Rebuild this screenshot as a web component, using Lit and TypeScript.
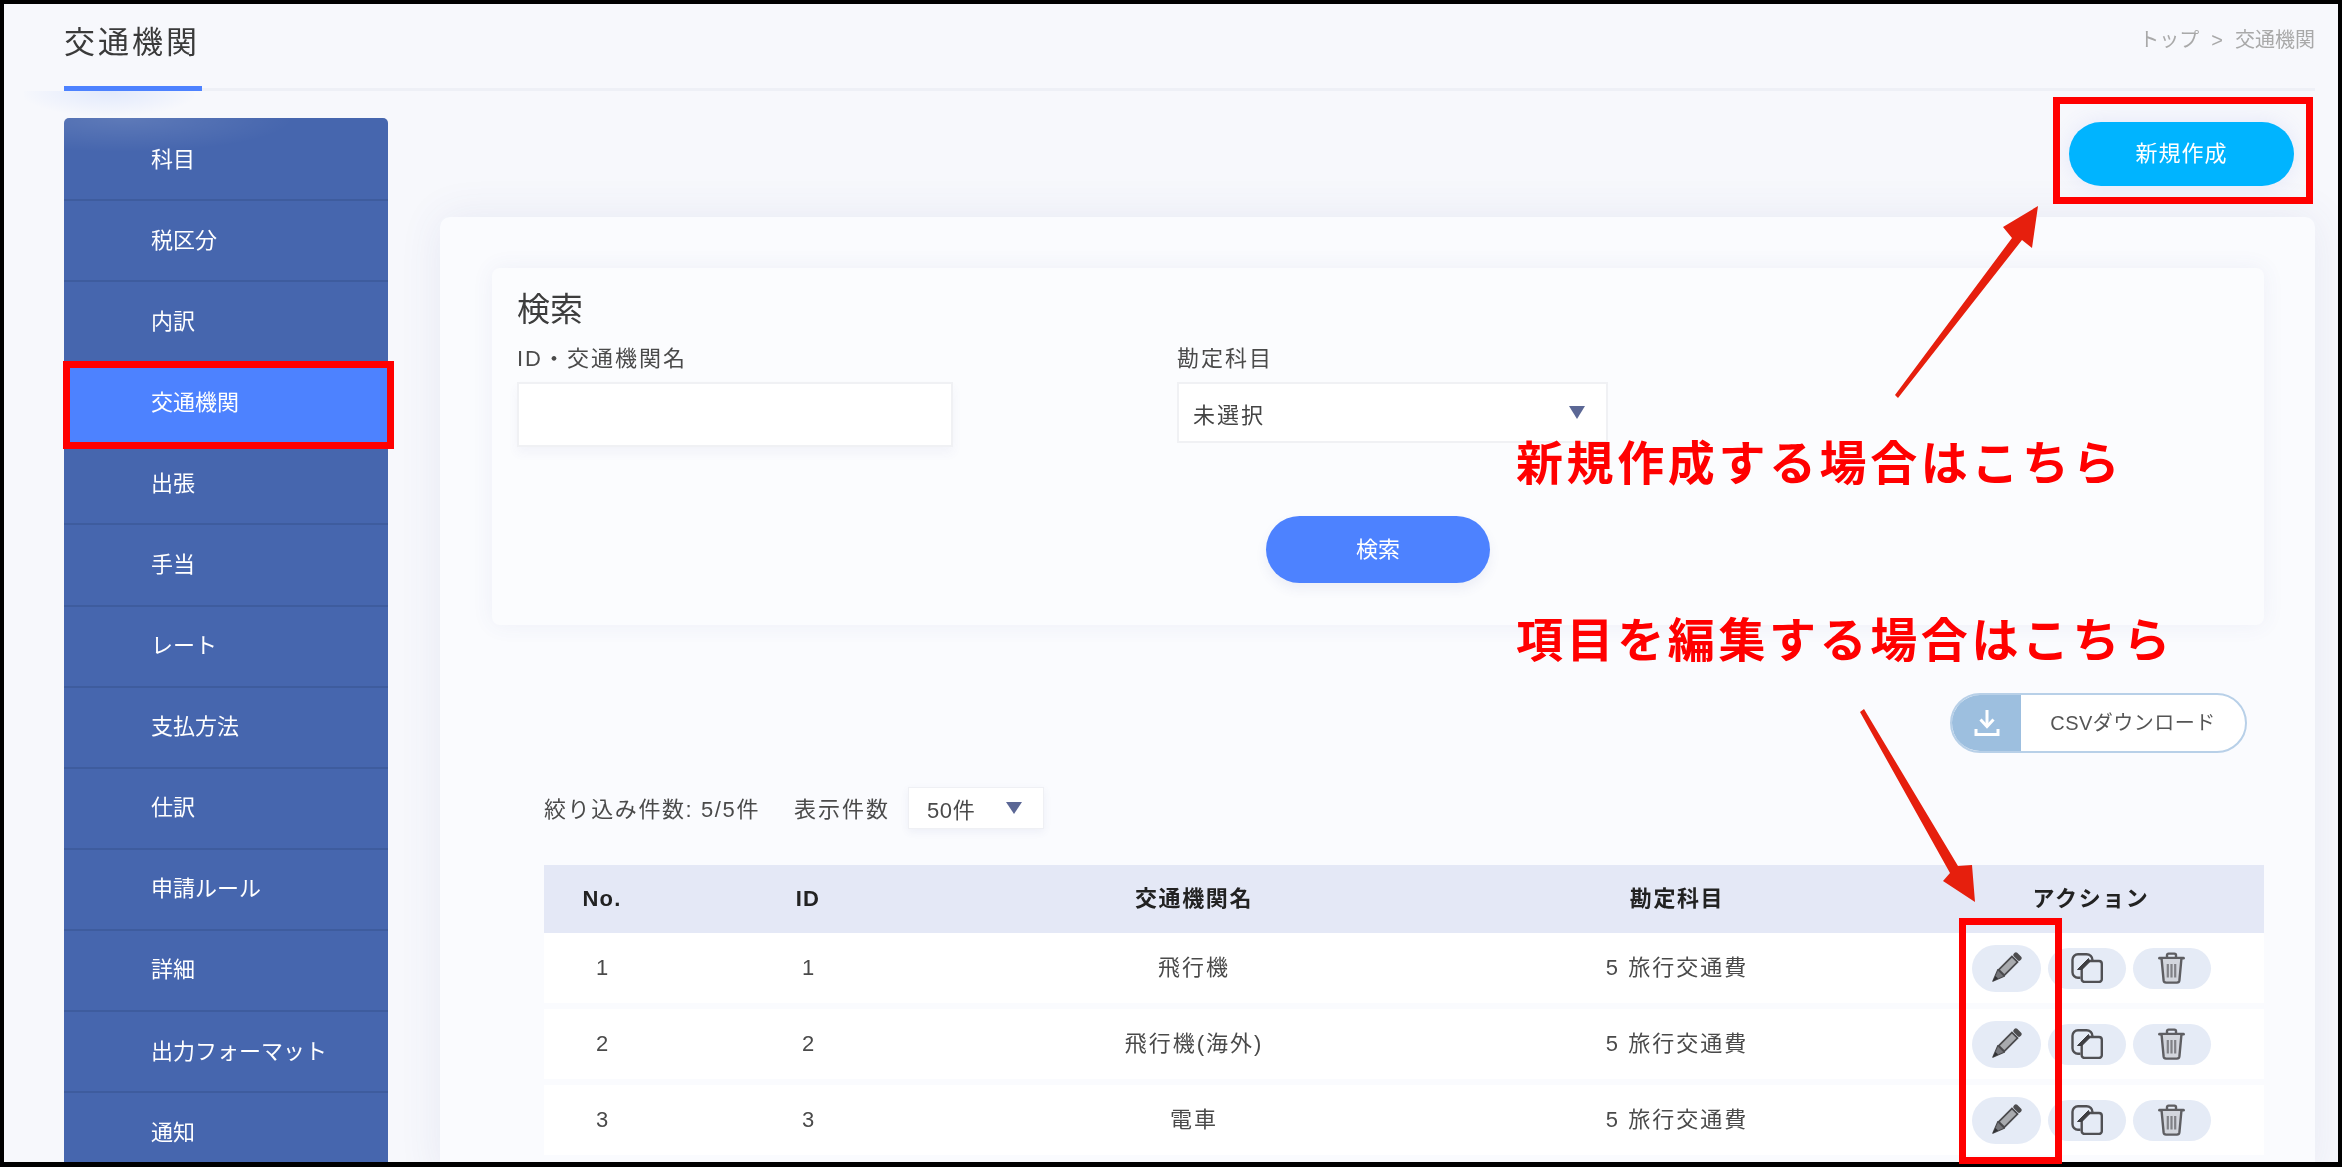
import { LitElement, html, css, svg } from "lit";
import { customElement } from "lit/decorators.js";

const NAV = ["科目", "税区分", "内訳", "交通機関", "出張", "手当", "レート", "支払方法", "仕訳", "申請ルール", "詳細", "出力フォーマット", "通知"];
const ROWS = [
  ["1", "1", "飛行機", "5 旅行交通費"],
  ["2", "2", "飛行機(海外)", "5 旅行交通費"],
  ["3", "3", "電車", "5 旅行交通費"],
];

const pencil = html`<svg class="ic-pencil" viewBox="0 0 24 24">
  <g transform="rotate(45 12 12)">
    <rect x="8" y="-4" width="8" height="4.2" rx="1.6" fill="#4d4d4f"></rect>
    <rect x="8.6" y="1.4" width="6.8" height="16" fill="#a8aaae" stroke="#4a4a4d" stroke-width="1.5"></rect>
    <path d="M8 18h8l-4 10z" fill="#74757a" stroke="#4a4a4d" stroke-width="1" stroke-linejoin="round"></path>
    <path d="M10.400 23.200h3.200l-1.600 4.800z" fill="#2f2f32"></path>
  </g>
</svg>`;

const copy = html`<svg class="ic-copy" viewBox="0 0 32 30" fill="none" stroke="#505054" stroke-width="2.400" stroke-linejoin="round">
  <path d="M9.500 24.800H7A5.500 5.500 0 0 1 1.500 19.300V6.700A5.500 5.500 0 0 1 7 1.200h8.500A6 6 0 0 1 21.500 7.200V8"></path>
  <path d="M17 8h11a2.800 2.800 0 0 1 2.800 2.800v15.400a2.800 2.800 0 0 1-2.800 2.800H13.500a2.800 2.800 0 0 1-2.800-2.800V14.500z"></path>
  <path d="M6.500 16.500 17.500 5.500l1 3.500-7.500 7.500z" fill="#3e3e42" stroke="#3e3e42" stroke-width="1"></path>
</svg>`;

const trash = html`<svg class="ic-trash" viewBox="0 0 27 32" fill="none" stroke="#5e5e62" stroke-width="2.400" stroke-linecap="round" stroke-linejoin="round">
  <path d="M9 5.500V3.200Q9 1.600 10.600 1.600h5.800Q18 1.600 18 3.200v2.300"></path>
  <path d="M1.500 6.200h24" stroke-width="2.800"></path>
  <path d="M3.600 7l2 21.400Q5.900 30.600 8 30.600h11q2.100 0 2.400-2.200L23.400 7" fill="#d3d6dd"></path>
  <path d="M9.800 12v13.500M13.500 12v13.500M17.200 12v13.500" stroke="#808186" stroke-width="2.200" stroke-linecap="butt"></path>
</svg>`;

@customElement("app-root")
export class AppRoot extends LitElement {
  static styles = css`
    :host {
      display: block;
      position: relative;
      width: 2342px;
      height: 1167px;
      background: #000;
      overflow: hidden;
      font-family: "Liberation Sans", "Noto Sans CJK JP", sans-serif;
      color: #444;
    }
    .frame {
      position: absolute;
      inset: 4px 4px 5px 4px;
      background: #f7f8fc;
      overflow: hidden;
      padding: 0 23px 0 60px;
      box-sizing: border-box;
      filter: blur(0.55px);
    }
    header { display: flex; height: 87px; }
    .tab {
      width: 138px;
      box-sizing: border-box;
      height: 87px;
      border-bottom: 5px solid #4d82ff;
      padding-bottom: 4px;
      font-size: 31px;
      line-height: 78px;
      letter-spacing: 3px;
      color: #3a3a3a;
      white-space: nowrap;
    }
    .glow {
      position: absolute;
      left: 20px;
      top: 87px;
      width: 170px;
      height: 28px;
      background: radial-gradient(ellipse 90px 26px at 50% 0, rgba(77, 130, 255, 0.13), rgba(77, 130, 255, 0));
    }
    .crumb {
      flex: 1;
      box-sizing: border-box;
      height: 87px;
      border-bottom: 3px solid #eef0f6;
      text-align: right;
      font-size: 20px;
      line-height: 72px;
      color: #a9a9a9;
    }
    .crumb span { margin: 0 12px; }
    .body { display: flex; gap: 52px; }
    nav {
      width: 324px;
      flex: none;
      margin-top: 27px;
      padding-top: 2px;
      background: #4666ae radial-gradient(ellipse 170px 34px at 60px 0, rgba(255, 255, 255, 0.13), rgba(255, 255, 255, 0)) no-repeat;
      border-radius: 5px 5px 0 0;
      overflow: hidden;
    }
    .item {
      height: 81.1px;
      box-sizing: border-box;
      border-bottom: 2px solid #3e5c9e;
      padding: 0 0 6px 87px;
      display: flex;
      align-items: center;
      font-size: 22px;
      color: #fff;
    }
    .item.on { background: #4d82ff; }
    .main { flex: 1; min-width: 0; }
    .top { display: flex; justify-content: flex-end; padding: 31px 21px 31px 0; }
    .btn-new {
      width: 225px;
      height: 64px;
      box-sizing: border-box;
      padding-bottom: 6px;
      border-radius: 32px;
      background: #00b4ff;
      color: #fff;
      font-size: 22px;
      letter-spacing: 1px;
      display: flex;
      align-items: center;
      justify-content: center;
      box-shadow: 0 0 22px rgba(90, 110, 220, 0.12);
    }
    .panel {
      background: #fafbfe;
      border-radius: 10px 10px 0 0;
      padding: 51px 51px 40px 52px;
      box-shadow: 0 0 44px rgba(70, 80, 150, 0.09);
      height: 960px;
      box-sizing: border-box;
    }
    .card {
      background: #fbfcfe;
      border-radius: 8px;
      padding: 19px 25px 42px;
      box-shadow: 0 0 22px rgba(70, 80, 150, 0.07);
    }
    .card h2 {
      margin: 0 0 11px;
      font-weight: 400;
      font-size: 33px;
      line-height: 46px;
      color: #3d3d3d;
    }
    .fields { display: flex; gap: 224px; }
    .lab {
      font-size: 22px;
      line-height: 30px;
      margin-bottom: 8px;
      white-space: nowrap;
      letter-spacing: 2px;
      color: #4a4a4a;
    }
    .input {
      width: 436px;
      height: 65px;
      background: #fff;
      border: 2px solid #f0f1f4;
      box-sizing: border-box;
      box-shadow: 0 6px 10px rgba(70, 80, 150, 0.05);
    }
    .select {
      width: 431px;
      height: 61px;
      background: #fff;
      border: 2px solid #f0f1f4;
      box-sizing: border-box;
      display: flex;
      align-items: center;
      justify-content: space-between;
      padding: 0 21px 0 14px;
      font-size: 22px;
      letter-spacing: 2px;
      color: #444;
    }
    .tri {
      width: 0;
      height: 0;
      border-left: 8px solid transparent;
      border-right: 8px solid transparent;
      border-top: 13px solid #5b6795;
    }
    .btn-search {
      width: 224px;
      height: 67px;
      box-sizing: border-box;
      padding-bottom: 6px;
      margin: 69px auto 0;
      border-radius: 34px;
      background: #4d82ff;
      color: #fff;
      font-size: 22px;
      display: flex;
      align-items: center;
      justify-content: center;
      box-shadow: 0 6px 12px rgba(70, 80, 150, 0.08);
    }
    .list { margin-left: 52px; }
    .csv-row { display: flex; justify-content: flex-end; margin-top: 68px; padding-right: 17px; }
    .csv {
      width: 297px;
      height: 60px;
      border: 2px solid #b8d0e8;
      border-radius: 30px;
      background: #fff;
      box-sizing: border-box;
      display: flex;
      overflow: hidden;
      font-size: 20px;
      letter-spacing: 0.5px;
      color: #555;
    }
    .csv .ico {
      width: 69px;
      background: #9dbfdf;
      display: flex;
      align-items: center;
      justify-content: center;
    }
    .csv .ico svg { width: 26px; height: 28px; }
    .csv .txt { flex: 1; display: flex; align-items: center; justify-content: center; white-space: nowrap; padding-bottom: 3px; }
    .filter {
      display: flex;
      align-items: center;
      height: 42px;
      margin-top: 34px;
      font-size: 22px;
      letter-spacing: 1.6px;
      color: #4a4a4a;
    }
    .filter .count { white-space: nowrap; width: 250px; padding-bottom: 2px; }
    .filter .show { white-space: nowrap; width: 114px; letter-spacing: 2px; padding-bottom: 2px; }
    .mini {
      width: 136px;
      height: 42px;
      box-sizing: border-box;
      background: #fff;
      border: 1px solid #eff0f4;
      box-shadow: 0 3px 8px rgba(70, 80, 150, 0.07);
      display: flex;
      align-items: center;
      padding-left: 18px;
      font-size: 22px;
      letter-spacing: 0.6px;
    }
    .mini .tri { margin-left: 31px; border-top-width: 12px; }
    .table { margin-top: 36px; display: flex; flex-direction: column; gap: 6px; }
    .tr {
      display: grid;
      grid-template-columns: 116px 296px 476px 490px 338px 1fr;
      align-items: center;
      text-align: center;
      height: 70px;
      background: #fff;
      font-size: 22px;
      color: #4a4a4a;
    }
    .tr .cj { padding-bottom: 7px; letter-spacing: 2px; }
    .tr.head {
      height: 68px;
      margin-bottom: -6px;
      background: #e4e8f6;
      font-weight: 700;
      color: #222;
      letter-spacing: 1.2px;
    }
    .tr.head .cj { padding-bottom: 6px; letter-spacing: 1.6px; }
    .acts { display: flex; justify-content: center; align-items: center; gap: 7px; }
    .pill {
      height: 41px;
      width: 78px;
      border-radius: 21px;
      background: #e5ebf6;
      display: flex;
      align-items: center;
      justify-content: center;
    }
    .pill.edit { height: 47px; width: 69px; border-radius: 24px; }
    .ic-pencil { width: 28px; height: 30px; overflow: visible; }
    .ic-copy { width: 32px; height: 30px; }
    .ic-trash { width: 27px; height: 32px; }
    .overlay { position: absolute; left: 0; top: 0; width: 2342px; height: 1167px; pointer-events: none; }
    .note {
      position: absolute;
      left: 1516px;
      font-size: 47px;
      line-height: 60px;
      font-weight: 700;
      letter-spacing: 3.6px;
      color: #ff0000;
      white-space: nowrap;
      filter: blur(0.4px);
    }
    .n1 { top: 434px; }
    .n2 { top: 611px; }
    .box { position: absolute; border: 7px solid #ff0000; box-sizing: border-box; }
    .b1 { left: 63px; top: 361px; width: 331px; height: 88px; }
    .b2 { left: 2053px; top: 97px; width: 260px; height: 107px; }
    .b3 { left: 1959px; top: 918px; width: 103px; height: 246px; }
  `;

  render() {
    return html`
      <div class="frame">
        <div class="glow"></div>
        <header>
          <div class="tab">交通機関</div>
          <div class="crumb">トップ<span>&gt;</span>交通機関</div>
        </header>
        <div class="body">
          <nav>
            ${NAV.map((n) => html`<div class="item ${n === "交通機関" ? "on" : ""}">${n}</div>`)}
          </nav>
          <div class="main">
            <div class="top"><div class="btn-new">新規作成</div></div>
            <div class="panel">
              <section class="card">
                <h2>検索</h2>
                <div class="fields">
                  <div>
                    <div class="lab">ID・交通機関名</div>
                    <div class="input"></div>
                  </div>
                  <div>
                    <div class="lab">勘定科目</div>
                    <div class="select"><span>未選択</span><i class="tri"></i></div>
                  </div>
                </div>
                <div class="btn-search">検索</div>
              </section>
              <section class="list">
                <div class="csv-row">
                  <div class="csv">
                    <div class="ico">
                      <svg viewBox="0 0 26 28" fill="none" stroke="#fff" stroke-width="3">
                        <path d="M13 1v15"></path>
                        <path d="M6.500 10.500 13 17.500l6.500-7" stroke-linejoin="miter"></path>
                        <path d="M2 20v5.500h22V20"></path>
                      </svg>
                    </div>
                    <div class="txt">CSVダウンロード</div>
                  </div>
                </div>
                <div class="filter">
                  <span class="count">絞り込み件数: 5/5件</span>
                  <span class="show">表示件数</span>
                  <div class="mini">50件<i class="tri"></i></div>
                </div>
                <div class="table">
                  <div class="tr head">
                    <span>No.</span><span>ID</span><span class="cj">交通機関名</span><span class="cj">勘定科目</span><span class="cj">アクション</span>
                  </div>
                  ${ROWS.map(
                    (r) => html`<div class="tr">
                      <span>${r[0]}</span><span>${r[1]}</span><span class="cj">${r[2]}</span><span class="cj">${r[3]}</span>
                      <div class="acts">
                        <div class="pill edit">${pencil}</div>
                        <div class="pill">${copy}</div>
                        <div class="pill">${trash}</div>
                      </div>
                    </div>`
                  )}
                </div>
              </section>
            </div>
          </div>
        </div>
      </div>

      <svg class="overlay" viewBox="0 0 2342 1167">
        ${svg`<path fill="#e61f0d" d="M1895 395 L2012 238 L2003 227 L2038 206 L2032 248 L2022 240 L1898 398 Z"></path>
        <path fill="#e61f0d" d="M1860 712 L1864 709 L1958 866 L1972 865 L1975 902 L1943 881 L1950 873 Z"></path>`}
      </svg>
      <div class="note n1">新規作成する場合はこちら</div>
      <div class="note n2">項目を編集する場合はこちら</div>
      <div class="box b1"></div>
      <div class="box b2"></div>
      <div class="box b3"></div>
    `;
  }
}
